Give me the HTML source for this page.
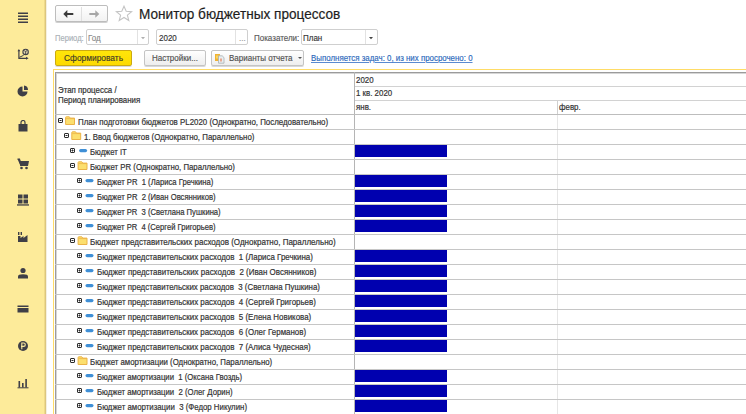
<!DOCTYPE html>
<html><head><meta charset="utf-8">
<style>
*{margin:0;padding:0;box-sizing:border-box}
html,body{width:746px;height:414px;overflow:hidden;background:#fff;font-family:"Liberation Sans",sans-serif;color:#333}
.a{position:absolute}
#side{position:absolute;left:0;top:0;width:47px;height:414px;background:linear-gradient(90deg,#FDEB9A 0,#FDEB9A 44px,#EFDA8A 44px,#EFDA8A 45px,#DCC67E 45px,#DCC67E 46px,#F4F0E0 46px)}
.ic{position:absolute;left:17px;width:13px;height:13px}
.ic svg{display:block}
.nav{position:absolute;left:55px;top:5px;width:53px;height:17px;border:1px solid #bdbdbd;border-radius:2px;background:linear-gradient(#fff,#f2f2f2);box-shadow:0 1px 0 #d0d0d0}
.nav .d{position:absolute;left:25px;top:1px;width:1px;height:14px;background:#e0e0e0}
.title{position:absolute;left:139px;top:3.9px;font-size:14.3px;color:#1e1e1e;-webkit-text-stroke:0.2px #1e1e1e;white-space:nowrap;line-height:20px;transform:scaleX(0.951);transform-origin:0 0}
.lbl{position:absolute;font-size:8.6px;white-space:nowrap;line-height:10px;-webkit-text-stroke:0.15px currentColor;transform:scaleX(0.9302);transform-origin:0 0}
.inp{position:absolute;top:29px;height:16px;border:1px solid #cfcfcf;border-radius:2px;background:#fff}
.inp .dv{position:absolute;top:0;width:1px;height:14px;background:#e2e2e2}
.btn{position:absolute;top:50px;height:15.5px;border:1px solid #c4c4c4;border-radius:2px;background:linear-gradient(#fff,#eee);box-shadow:0 1px 0 #d8d8d8;font-size:8.6px;line-height:13.5px;white-space:nowrap}
.btn span{transform:scaleX(0.93);transform-origin:0 0;-webkit-text-stroke:0.15px currentColor}
#ybtn{left:55px;width:77px;background:linear-gradient(#FFE60A,#FDDA00);border-color:#CCAA10;color:#3d3a2a}
.yl{position:absolute;left:53px;top:69px;width:693px;height:1px;background:#FFDC66}
.yv{position:absolute;left:53px;top:69px;width:1px;height:345px;background:#FFDC66}
#grid{position:absolute;left:55px;top:71.5px;width:691px;height:343px;border-left:1px solid #9b9b9b;border-top:1px solid #9b9b9b;box-shadow:inset 1px 1px 0 #d6d6d6}
.hl{position:absolute;left:55px;width:691px;height:1px;background:#c6c6c6}
.vl{position:absolute;left:354px;top:72px;width:1px;height:342px;background:#b5b5b5}
.tt{position:absolute;font-size:8.6px;line-height:15px;white-space:nowrap;color:#333;-webkit-text-stroke:0.2px #333;transform:scaleX(0.9186);transform-origin:0 0}
.bar{position:absolute;left:355px;width:92px;height:12px;background:#0000AF}
.ht{position:absolute;font-size:8.6px;white-space:nowrap;color:#333;-webkit-text-stroke:0.2px #333;line-height:14px;transform:scaleX(0.9186);transform-origin:0 0}
</style></head><body>
<div id="side">
<div class="ic" style="top:11.4px"><svg width="12" height="12" viewBox="0 0 12 12"><path d="M1 2.3H11M1 5.3H11M1 8.3H11M1 11.2H11" stroke="#3f3f47" stroke-width="1.4"/></svg></div>
<div class="ic" style="top:48.0px"><svg width="13" height="13" viewBox="0 0 13 13"><path d="M1.9 2.5V10.3H9.5" stroke="#3f3f47" stroke-width="1.2" fill="none"/><path d="M0.5 3.2L1.9 0.9L3.3 3.2Z M9 8.8L11.6 10.3L9 11.8Z" fill="#3f3f47"/><path d="M2.4 9.3L6.6 7.3" stroke="#3f3f47" stroke-width="1"/><circle cx="8.6" cy="3.9" r="2.7" fill="#E9DDB0" stroke="#3f3f47" stroke-width="1.1"/><path d="M7.6 2.4L8.6 4.2L9.6 2.4M8.6 4.2V6" stroke="#3f3f47" stroke-width="0.9" fill="none"/></svg></div>
<div class="ic" style="top:84.7px"><svg width="12" height="12" viewBox="0 0 12 12"><path d="M5.5 1.5A5 5 0 1 0 10.5 6.5H5.5Z" fill="#3f3f47"/><path d="M7 0.5A4.5 4.5 0 0 1 11 5H7Z" fill="#3f3f47"/></svg></div>
<div class="ic" style="top:120.3px"><svg width="12" height="12" viewBox="0 0 12 12"><path d="M1.5 4H10.5V11.5H1.5Z" fill="#3f3f47"/><path d="M4 5V2.5A2 2 0 0 1 8 2.5V5" stroke="#3f3f47" stroke-width="1.2" fill="none"/></svg></div>
<div class="ic" style="top:158.4px"><svg width="13" height="12" viewBox="0 0 13 12"><path d="M0.5 1H2.5L3.5 3H12L11 8H3.5Z" fill="#3f3f47"/><path d="M0.5 1H2.5L4 8" stroke="#3f3f47" stroke-width="1.2" fill="none"/><circle cx="4.5" cy="10" r="1.3" fill="#3f3f47"/><circle cx="9.5" cy="10" r="1.3" fill="#3f3f47"/></svg></div>
<div class="ic" style="top:193.9px"><svg width="12" height="12" viewBox="0 0 12 12"><rect x="1" y="0.5" width="4.5" height="4" fill="#3f3f47"/><rect x="6.5" y="0.5" width="4.5" height="4" fill="#3f3f47"/><rect x="1" y="5.5" width="4.5" height="4" fill="#3f3f47"/><rect x="6.5" y="5.5" width="4.5" height="4" fill="#3f3f47"/><rect x="0" y="10.3" width="12" height="1.3" fill="#3f3f47"/></svg></div>
<div class="ic" style="top:230.5px"><svg width="12" height="12" viewBox="0 0 12 12"><path d="M1 11V5H3.5V7L6.5 5V7L10.5 4V11Z" fill="#3f3f47"/><rect x="1" y="1" width="1.4" height="3" fill="#3f3f47"/><rect x="3.6" y="1" width="1.4" height="3" fill="#3f3f47"/></svg></div>
<div class="ic" style="top:267.0px"><svg width="12" height="12" viewBox="0 0 12 12"><circle cx="6" cy="3.5" r="2.6" fill="#3f3f47"/><path d="M1 11.5V9.5C1 8 2.5 7.3 6 7.3C9.5 7.3 11 8 11 9.5V11.5Z" fill="#3f3f47"/></svg></div>
<div class="ic" style="top:303.4px"><svg width="12" height="12" viewBox="0 0 12 12"><rect x="0.5" y="2.5" width="11" height="1.5" fill="#3f3f47"/><rect x="0.5" y="5" width="11" height="4.5" fill="#3f3f47"/></svg></div>
<div class="ic" style="top:340.1px"><svg width="12" height="12" viewBox="0 0 12 12"><circle cx="6" cy="6" r="5" fill="#3f3f47"/><path d="M4.8 9.2V3H6.6A1.7 1.7 0 0 1 6.6 6.4H4" stroke="#FCEA9E" stroke-width="1.1" fill="none"/></svg></div>
<div class="ic" style="top:376.9px"><svg width="12" height="12" viewBox="0 0 12 12"><rect x="1.5" y="4" width="1.6" height="6.5" fill="#3f3f47"/><rect x="5" y="6" width="1.6" height="4.5" fill="#3f3f47"/><rect x="8.3" y="2" width="1.6" height="8.5" fill="#3f3f47"/><rect x="0.5" y="10.3" width="11" height="1" fill="#3f3f47"/></svg></div>
</div>
<div class="nav"><div class="d"></div>
<svg class="a" style="left:7px;top:3px" width="12" height="10" viewBox="0 0 12 10"><path d="M0.3 5L4.3 1.1V8.9Z" fill="#3a3a3a"/><path d="M3.5 5H10.3" stroke="#3a3a3a" stroke-width="2"/></svg>
<svg class="a" style="left:32.5px;top:3px" width="12" height="10" viewBox="0 0 12 10"><path d="M10.3 5L6.3 1.3V8.7Z" fill="#a6a6a6"/><path d="M0.3 5H7" stroke="#a6a6a6" stroke-width="2"/></svg>
</div>
<svg class="a" style="left:115px;top:5px" width="18" height="17" viewBox="0 0 18 17"><path d="M9 1.2L11.2 6.3L16.6 6.6L12.4 10.1L13.8 15.5L9 12.5L4.2 15.5L5.6 10.1L1.4 6.6L6.8 6.3Z" fill="none" stroke="#c4c4c4" stroke-width="1.1"/></svg>
<div class="title">Монитор бюджетных процессов</div>

<div class="lbl" style="left:55px;top:32.5px;color:#a9b0b6;transform:scaleX(0.882)">Период:</div>
<div class="inp" style="left:86px;width:63px"><div class="dv" style="left:50px"></div>
<div class="lbl" style="left:1.2px;top:2.5px;color:#8a8a8a">Год</div>
<svg class="a" style="left:54px;top:6.5px" width="4" height="3"><path d="M0 0H4L2 2.2Z" fill="#b0b0b0"/></svg></div>
<div class="inp" style="left:156px;width:92px"><div class="dv" style="left:78px"></div>
<div class="lbl" style="left:2px;top:2.5px;color:#333">2020</div>
<div class="lbl" style="left:82px;top:3px;color:#999">...</div></div>
<div class="lbl" style="left:254px;top:32.5px;color:#585858">Показатели:</div>
<div class="inp" style="left:300.5px;width:77px"><div class="dv" style="left:63px"></div>
<div class="lbl" style="left:1.2px;top:2.5px;color:#333">План</div>
<svg class="a" style="left:67.5px;top:6.5px" width="4" height="3"><path d="M0 0H4L2 2.2Z" fill="#444"/></svg></div>

<div class="btn" id="ybtn"><span class="a" style="left:8px;top:0.8px;font-size:9px">Сформировать</span></div>
<div class="btn" style="left:144px;width:62px"><span class="a" style="left:7px;top:1px;color:#505050">Настройки...</span></div>
<div class="btn" style="left:211px;width:93px">
<svg class="a" style="left:3px;top:2.5px" width="12" height="10" viewBox="0 0 12 10"><rect x="0" y="0" width="5" height="7" fill="#F0B232"/><rect x="1" y="1.5" width="2" height="3" fill="#F8D560"/><path d="M3.5 1.8H7.2L9 3.6V9.2H3.5Z" fill="#e9eef0" stroke="#a8b0b4" stroke-width="0.8"/><rect x="5" y="4.5" width="2" height="3" fill="#e8a890"/></svg>
<span class="a" style="left:17px;top:1.3px;color:#505050">Варианты отчета</span>
<svg class="a" style="left:85.5px;top:6px" width="4" height="2"><path d="M0 0H4L2 2Z" fill="#555"/></svg></div>
<div class="lbl" style="left:311px;top:53.2px;color:#2a68bb;text-decoration:underline;text-decoration-color:#5a8ad0;transform:scaleX(0.918)">Выполняется задач: 0, из них просрочено: 0</div>

<div class="yl"></div><div class="yv"></div>
<div id="grid"></div>
<div class="vl"></div>
<div class="a" style="left:557px;top:100px;width:1px;height:14px;background:#d0d0d0"></div><div class="a" style="left:557px;top:114px;width:1px;height:300px;background:#e6e6e6"></div>
<div class="hl" style="left:355px;top:86px;width:391px;background:#d2d2d2"></div>
<div class="hl" style="left:355px;top:100px;width:391px;background:#d2d2d2"></div>
<div class="hl" style="top:114px;background:#bdbdbd"></div>
<div class="ht" style="left:58px;top:84.6px;line-height:10.2px">Этап процесса /<br>Период планирования</div>
<div class="ht" style="left:356px;top:73px">2020</div>
<div class="ht" style="left:356px;top:86.3px">1 кв. 2020</div>
<div class="ht" style="left:356px;top:100px">янв.</div>
<div class="ht" style="left:558.5px;top:100px">февр.</div>
<div class="hl" style="top:129px"></div>
<svg class="a" style="left:58px;top:118px" width="7" height="7"><rect x="0.5" y="0.5" width="4" height="4" rx="0.5" fill="#fff" stroke="#2c2c2c" stroke-width="1"/><path d="M1.5 2.5H3.5" stroke="#2c2c2c" stroke-width="1"/></svg>
<svg class="a" style="left:65px;top:116px" width="12" height="10"><path d="M0.60 8.50V1.50Q0.60 0.80 1.30 0.80H4.30L5.30 2.10H9.50V8.50Z" fill="#FCDF6E" stroke="#EBB348" stroke-width="1"/><path d="M1.10 2.60H9.10" stroke="#EBB348" stroke-width="0.8"/></svg>
<div class="tt" style="left:77.7px;top:114.5px;transform:scaleX(0.9186)">План подготовки бюджетов PL2020 (Однократно, Последовательно)</div>
<div class="hl" style="top:144px"></div>
<svg class="a" style="left:64px;top:133px" width="7" height="7"><rect x="0.5" y="0.5" width="4" height="4" rx="0.5" fill="#fff" stroke="#2c2c2c" stroke-width="1"/><path d="M1.5 2.5H3.5" stroke="#2c2c2c" stroke-width="1"/></svg>
<svg class="a" style="left:71px;top:131px" width="12" height="10"><path d="M0.80 8.50V1.50Q0.80 0.80 1.50 0.80H4.50L5.50 2.10H9.70V8.50Z" fill="#FCDF6E" stroke="#EBB348" stroke-width="1"/><path d="M1.30 2.60H9.30" stroke="#EBB348" stroke-width="0.8"/></svg>
<div class="tt" style="left:83.9px;top:129.5px;transform:scaleX(0.9165)">1. Ввод бюджетов (Однократно, Параллельно)</div>
<div class="hl" style="top:159px"></div>
<svg class="a" style="left:70px;top:148px" width="7" height="7"><rect x="0.5" y="0.5" width="4" height="4" rx="0.5" fill="#fff" stroke="#2c2c2c" stroke-width="1"/><path d="M1.5 2.5H3.5" stroke="#2c2c2c" stroke-width="1"/><path d="M2.5 1.5V3.5" stroke="#2c2c2c" stroke-width="1"/></svg>
<svg class="a" style="left:79px;top:149px" width="10" height="5"><rect x="0.10" y="0.00" width="8" height="3.2" rx="1.6" fill="#3F8FD6"/></svg>
<div class="tt" style="left:90.2px;top:144.5px;transform:scaleX(0.8943)">Бюджет IT</div>
<div class="bar" style="top:145px"></div>
<div class="hl" style="top:174px"></div>
<svg class="a" style="left:70px;top:163px" width="7" height="7"><rect x="0.5" y="0.5" width="4" height="4" rx="0.5" fill="#fff" stroke="#2c2c2c" stroke-width="1"/><path d="M1.5 2.5H3.5" stroke="#2c2c2c" stroke-width="1"/></svg>
<svg class="a" style="left:77px;top:161px" width="12" height="10"><path d="M1.10 8.50V1.50Q1.10 0.80 1.80 0.80H4.80L5.80 2.10H10.00V8.50Z" fill="#FCDF6E" stroke="#EBB348" stroke-width="1"/><path d="M1.60 2.60H9.60" stroke="#EBB348" stroke-width="0.8"/></svg>
<div class="tt" style="left:90.2px;top:159.5px;transform:scaleX(0.9061)">Бюджет PR (Однократно, Параллельно)</div>
<div class="hl" style="top:189px"></div>
<svg class="a" style="left:77px;top:178px" width="7" height="7"><rect x="0.5" y="0.5" width="4" height="4" rx="0.5" fill="#fff" stroke="#2c2c2c" stroke-width="1"/><path d="M1.5 2.5H3.5" stroke="#2c2c2c" stroke-width="1"/><path d="M2.5 1.5V3.5" stroke="#2c2c2c" stroke-width="1"/></svg>
<svg class="a" style="left:85px;top:179px" width="10" height="5"><rect x="0.50" y="0.00" width="8" height="3.2" rx="1.6" fill="#3F8FD6"/></svg>
<div class="tt" style="left:96.6px;top:174.5px;transform:scaleX(0.8911)">Бюджет PR&nbsp; 1 (Лариса Гречкина)</div>
<div class="bar" style="top:175px"></div>
<div class="hl" style="top:204px"></div>
<svg class="a" style="left:77px;top:193px" width="7" height="7"><rect x="0.5" y="0.5" width="4" height="4" rx="0.5" fill="#fff" stroke="#2c2c2c" stroke-width="1"/><path d="M1.5 2.5H3.5" stroke="#2c2c2c" stroke-width="1"/><path d="M2.5 1.5V3.5" stroke="#2c2c2c" stroke-width="1"/></svg>
<svg class="a" style="left:85px;top:194px" width="10" height="5"><rect x="0.50" y="0.00" width="8" height="3.2" rx="1.6" fill="#3F8FD6"/></svg>
<div class="tt" style="left:96.6px;top:189.5px;transform:scaleX(0.8901)">Бюджет PR&nbsp; 2 (Иван Овсянников)</div>
<div class="bar" style="top:190px"></div>
<div class="hl" style="top:219px"></div>
<svg class="a" style="left:77px;top:208px" width="7" height="7"><rect x="0.5" y="0.5" width="4" height="4" rx="0.5" fill="#fff" stroke="#2c2c2c" stroke-width="1"/><path d="M1.5 2.5H3.5" stroke="#2c2c2c" stroke-width="1"/><path d="M2.5 1.5V3.5" stroke="#2c2c2c" stroke-width="1"/></svg>
<svg class="a" style="left:85px;top:209px" width="10" height="5"><rect x="0.50" y="0.00" width="8" height="3.2" rx="1.6" fill="#3F8FD6"/></svg>
<div class="tt" style="left:96.6px;top:204.5px;transform:scaleX(0.8886)">Бюджет PR&nbsp; 3 (Светлана Пушкина)</div>
<div class="bar" style="top:205px"></div>
<div class="hl" style="top:234px"></div>
<svg class="a" style="left:77px;top:223px" width="7" height="7"><rect x="0.5" y="0.5" width="4" height="4" rx="0.5" fill="#fff" stroke="#2c2c2c" stroke-width="1"/><path d="M1.5 2.5H3.5" stroke="#2c2c2c" stroke-width="1"/><path d="M2.5 1.5V3.5" stroke="#2c2c2c" stroke-width="1"/></svg>
<svg class="a" style="left:85px;top:224px" width="10" height="5"><rect x="0.50" y="0.00" width="8" height="3.2" rx="1.6" fill="#3F8FD6"/></svg>
<div class="tt" style="left:96.6px;top:219.5px;transform:scaleX(0.8858)">Бюджет PR&nbsp; 4 (Сергей Григорьев)</div>
<div class="bar" style="top:220px"></div>
<div class="hl" style="top:249px"></div>
<svg class="a" style="left:70px;top:238px" width="7" height="7"><rect x="0.5" y="0.5" width="4" height="4" rx="0.5" fill="#fff" stroke="#2c2c2c" stroke-width="1"/><path d="M1.5 2.5H3.5" stroke="#2c2c2c" stroke-width="1"/></svg>
<svg class="a" style="left:77px;top:236px" width="12" height="10"><path d="M1.10 8.50V1.50Q1.10 0.80 1.80 0.80H4.80L5.80 2.10H10.00V8.50Z" fill="#FCDF6E" stroke="#EBB348" stroke-width="1"/><path d="M1.60 2.60H9.60" stroke="#EBB348" stroke-width="0.8"/></svg>
<div class="tt" style="left:90.2px;top:234.5px;transform:scaleX(0.9315)">Бюджет представительских расходов (Однократно, Параллельно)</div>
<div class="hl" style="top:264px"></div>
<svg class="a" style="left:77px;top:253px" width="7" height="7"><rect x="0.5" y="0.5" width="4" height="4" rx="0.5" fill="#fff" stroke="#2c2c2c" stroke-width="1"/><path d="M1.5 2.5H3.5" stroke="#2c2c2c" stroke-width="1"/><path d="M2.5 1.5V3.5" stroke="#2c2c2c" stroke-width="1"/></svg>
<svg class="a" style="left:85px;top:254px" width="10" height="5"><rect x="0.50" y="0.00" width="8" height="3.2" rx="1.6" fill="#3F8FD6"/></svg>
<div class="tt" style="left:96.6px;top:249.5px;transform:scaleX(0.9212)">Бюджет представительских расходов&nbsp; 1 (Лариса Гречкина)</div>
<div class="bar" style="top:250px"></div>
<div class="hl" style="top:279px"></div>
<svg class="a" style="left:77px;top:268px" width="7" height="7"><rect x="0.5" y="0.5" width="4" height="4" rx="0.5" fill="#fff" stroke="#2c2c2c" stroke-width="1"/><path d="M1.5 2.5H3.5" stroke="#2c2c2c" stroke-width="1"/><path d="M2.5 1.5V3.5" stroke="#2c2c2c" stroke-width="1"/></svg>
<svg class="a" style="left:85px;top:269px" width="10" height="5"><rect x="0.50" y="0.00" width="8" height="3.2" rx="1.6" fill="#3F8FD6"/></svg>
<div class="tt" style="left:96.6px;top:264.5px;transform:scaleX(0.9253)">Бюджет представительских расходов&nbsp; 2 (Иван Овсянников)</div>
<div class="bar" style="top:265px"></div>
<div class="hl" style="top:294px"></div>
<svg class="a" style="left:77px;top:283px" width="7" height="7"><rect x="0.5" y="0.5" width="4" height="4" rx="0.5" fill="#fff" stroke="#2c2c2c" stroke-width="1"/><path d="M1.5 2.5H3.5" stroke="#2c2c2c" stroke-width="1"/><path d="M2.5 1.5V3.5" stroke="#2c2c2c" stroke-width="1"/></svg>
<svg class="a" style="left:85px;top:284px" width="10" height="5"><rect x="0.50" y="0.00" width="8" height="3.2" rx="1.6" fill="#3F8FD6"/></svg>
<div class="tt" style="left:96.6px;top:279.5px;transform:scaleX(0.9178)">Бюджет представительских расходов&nbsp; 3 (Светлана Пушкина)</div>
<div class="bar" style="top:280px"></div>
<div class="hl" style="top:309px"></div>
<svg class="a" style="left:77px;top:298px" width="7" height="7"><rect x="0.5" y="0.5" width="4" height="4" rx="0.5" fill="#fff" stroke="#2c2c2c" stroke-width="1"/><path d="M1.5 2.5H3.5" stroke="#2c2c2c" stroke-width="1"/><path d="M2.5 1.5V3.5" stroke="#2c2c2c" stroke-width="1"/></svg>
<svg class="a" style="left:85px;top:299px" width="10" height="5"><rect x="0.50" y="0.00" width="8" height="3.2" rx="1.6" fill="#3F8FD6"/></svg>
<div class="tt" style="left:96.6px;top:294.5px;transform:scaleX(0.9211)">Бюджет представительских расходов&nbsp; 4 (Сергей Григорьев)</div>
<div class="bar" style="top:295px"></div>
<div class="hl" style="top:324px"></div>
<svg class="a" style="left:77px;top:313px" width="7" height="7"><rect x="0.5" y="0.5" width="4" height="4" rx="0.5" fill="#fff" stroke="#2c2c2c" stroke-width="1"/><path d="M1.5 2.5H3.5" stroke="#2c2c2c" stroke-width="1"/><path d="M2.5 1.5V3.5" stroke="#2c2c2c" stroke-width="1"/></svg>
<svg class="a" style="left:85px;top:314px" width="10" height="5"><rect x="0.50" y="0.00" width="8" height="3.2" rx="1.6" fill="#3F8FD6"/></svg>
<div class="tt" style="left:96.6px;top:309.5px;transform:scaleX(0.9212)">Бюджет представительских расходов&nbsp; 5 (Елена Новикова)</div>
<div class="bar" style="top:310px"></div>
<div class="hl" style="top:339px"></div>
<svg class="a" style="left:77px;top:328px" width="7" height="7"><rect x="0.5" y="0.5" width="4" height="4" rx="0.5" fill="#fff" stroke="#2c2c2c" stroke-width="1"/><path d="M1.5 2.5H3.5" stroke="#2c2c2c" stroke-width="1"/><path d="M2.5 1.5V3.5" stroke="#2c2c2c" stroke-width="1"/></svg>
<svg class="a" style="left:85px;top:329px" width="10" height="5"><rect x="0.50" y="0.00" width="8" height="3.2" rx="1.6" fill="#3F8FD6"/></svg>
<div class="tt" style="left:96.6px;top:324.5px;transform:scaleX(0.9204)">Бюджет представительских расходов&nbsp; 6 (Олег Германов)</div>
<div class="bar" style="top:325px"></div>
<div class="hl" style="top:354px"></div>
<svg class="a" style="left:77px;top:343px" width="7" height="7"><rect x="0.5" y="0.5" width="4" height="4" rx="0.5" fill="#fff" stroke="#2c2c2c" stroke-width="1"/><path d="M1.5 2.5H3.5" stroke="#2c2c2c" stroke-width="1"/><path d="M2.5 1.5V3.5" stroke="#2c2c2c" stroke-width="1"/></svg>
<svg class="a" style="left:85px;top:344px" width="10" height="5"><rect x="0.50" y="0.00" width="8" height="3.2" rx="1.6" fill="#3F8FD6"/></svg>
<div class="tt" style="left:96.6px;top:339.5px;transform:scaleX(0.9212)">Бюджет представительских расходов&nbsp; 7 (Алиса Чудесная)</div>
<div class="bar" style="top:340px"></div>
<div class="hl" style="top:369px"></div>
<svg class="a" style="left:70px;top:358px" width="7" height="7"><rect x="0.5" y="0.5" width="4" height="4" rx="0.5" fill="#fff" stroke="#2c2c2c" stroke-width="1"/><path d="M1.5 2.5H3.5" stroke="#2c2c2c" stroke-width="1"/></svg>
<svg class="a" style="left:77px;top:356px" width="12" height="10"><path d="M1.10 8.50V1.50Q1.10 0.80 1.80 0.80H4.80L5.80 2.10H10.00V8.50Z" fill="#FCDF6E" stroke="#EBB348" stroke-width="1"/><path d="M1.60 2.60H9.60" stroke="#EBB348" stroke-width="0.8"/></svg>
<div class="tt" style="left:90.2px;top:354.5px;transform:scaleX(0.9106)">Бюджет амортизации (Однократно, Параллельно)</div>
<div class="hl" style="top:384px"></div>
<svg class="a" style="left:77px;top:373px" width="7" height="7"><rect x="0.5" y="0.5" width="4" height="4" rx="0.5" fill="#fff" stroke="#2c2c2c" stroke-width="1"/><path d="M1.5 2.5H3.5" stroke="#2c2c2c" stroke-width="1"/><path d="M2.5 1.5V3.5" stroke="#2c2c2c" stroke-width="1"/></svg>
<svg class="a" style="left:85px;top:374px" width="10" height="5"><rect x="0.50" y="0.00" width="8" height="3.2" rx="1.6" fill="#3F8FD6"/></svg>
<div class="tt" style="left:96.6px;top:369.5px;transform:scaleX(0.9000)">Бюджет амортизации&nbsp; 1 (Оксана Гвоздь)</div>
<div class="bar" style="top:370px"></div>
<div class="hl" style="top:399px"></div>
<svg class="a" style="left:77px;top:388px" width="7" height="7"><rect x="0.5" y="0.5" width="4" height="4" rx="0.5" fill="#fff" stroke="#2c2c2c" stroke-width="1"/><path d="M1.5 2.5H3.5" stroke="#2c2c2c" stroke-width="1"/><path d="M2.5 1.5V3.5" stroke="#2c2c2c" stroke-width="1"/></svg>
<svg class="a" style="left:85px;top:389px" width="10" height="5"><rect x="0.50" y="0.00" width="8" height="3.2" rx="1.6" fill="#3F8FD6"/></svg>
<div class="tt" style="left:96.6px;top:384.5px;transform:scaleX(0.9027)">Бюджет амортизации&nbsp; 2 (Олег Дорин)</div>
<div class="bar" style="top:385px"></div>
<div class="hl" style="top:414px"></div>
<svg class="a" style="left:77px;top:403px" width="7" height="7"><rect x="0.5" y="0.5" width="4" height="4" rx="0.5" fill="#fff" stroke="#2c2c2c" stroke-width="1"/><path d="M1.5 2.5H3.5" stroke="#2c2c2c" stroke-width="1"/><path d="M2.5 1.5V3.5" stroke="#2c2c2c" stroke-width="1"/></svg>
<svg class="a" style="left:85px;top:404px" width="10" height="5"><rect x="0.50" y="0.00" width="8" height="3.2" rx="1.6" fill="#3F8FD6"/></svg>
<div class="tt" style="left:96.6px;top:399.5px;transform:scaleX(0.9101)">Бюджет амортизации&nbsp; 3 (Федор Никулин)</div>
<div class="bar" style="top:400px"></div>
</body></html>
